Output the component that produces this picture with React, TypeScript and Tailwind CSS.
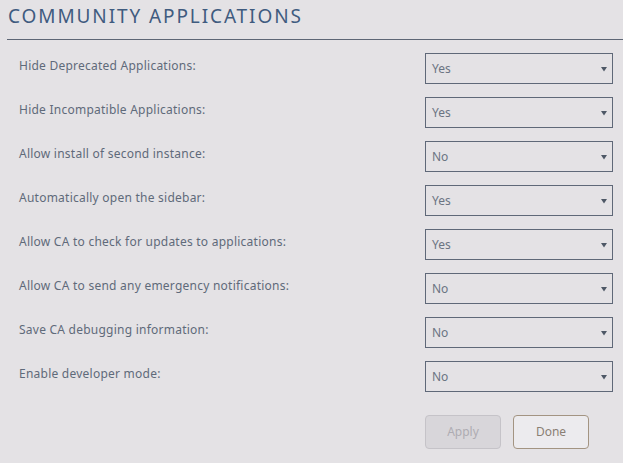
import React from 'react';

const settings: { label: string; value: string }[] = [
  { label: 'Hide Deprecated Applications:', value: 'Yes' },
  { label: 'Hide Incompatible Applications:', value: 'Yes' },
  { label: 'Allow install of second instance:', value: 'No' },
  { label: 'Automatically open the sidebar:', value: 'Yes' },
  { label: 'Allow CA to check for updates to applications:', value: 'Yes' },
  { label: 'Allow CA to send any emergency notifications:', value: 'No' },
  { label: 'Save CA debugging information:', value: 'No' },
  { label: 'Enable developer mode:', value: 'No' },
];

const SelectBox: React.FC<{ value: string }> = ({ value }) => (
  <div className="flex items-center justify-between w-[188px] h-[31px] border border-[#5f6878] pl-[6px] pr-[5px]">
    <span className="text-[12px] text-[#6b7482]">{value}</span>
    <svg width="6" height="6" viewBox="0 0 6 6">
      <path d="M0 1 H6 L3 5.5 Z" fill="#4e5866" />
    </svg>
  </div>
);

export default function App() {
  return (
    <div
      className="w-[623px] h-[463px] bg-[#e4e2e5] overflow-hidden"
      style={{ fontFamily: '"Noto Sans", "Open Sans", sans-serif' }}
    >
      <h1 className="pl-[8px] pt-[3px] h-[39px] text-[19px] leading-[26px] tracking-[0.1em] text-[#3f5b7f] font-normal">
        COMMUNITY APPLICATIONS
      </h1>
      <div className="ml-[7px] h-px bg-[#5d6675]" />
      <div className="flex flex-col gap-[13px] pt-[13px] pl-[19px]">
        {settings.map((s) => (
          <div key={s.label} className="flex items-start">
            <div className="w-[406px] pt-[5px] text-[12px] leading-[16px] tracking-[0.02em] text-[#5f6a7a]">{s.label}</div>
            <SelectBox value={s.value} />
          </div>
        ))}
      </div>
      <div className="flex gap-[12px] pl-[425px] pt-[23px]">
        <button className="w-[76px] h-[34px] rounded-[4px] border border-[#c5c3c8] bg-[#d8d6da] text-[12px] text-[#aeacb2]">
          Apply
        </button>
        <button className="w-[76px] h-[34px] rounded-[4px] border border-[#a39482] bg-[#ecebee] text-[12px] text-[#8a7f74]">
          Done
        </button>
      </div>
    </div>
  );
}
